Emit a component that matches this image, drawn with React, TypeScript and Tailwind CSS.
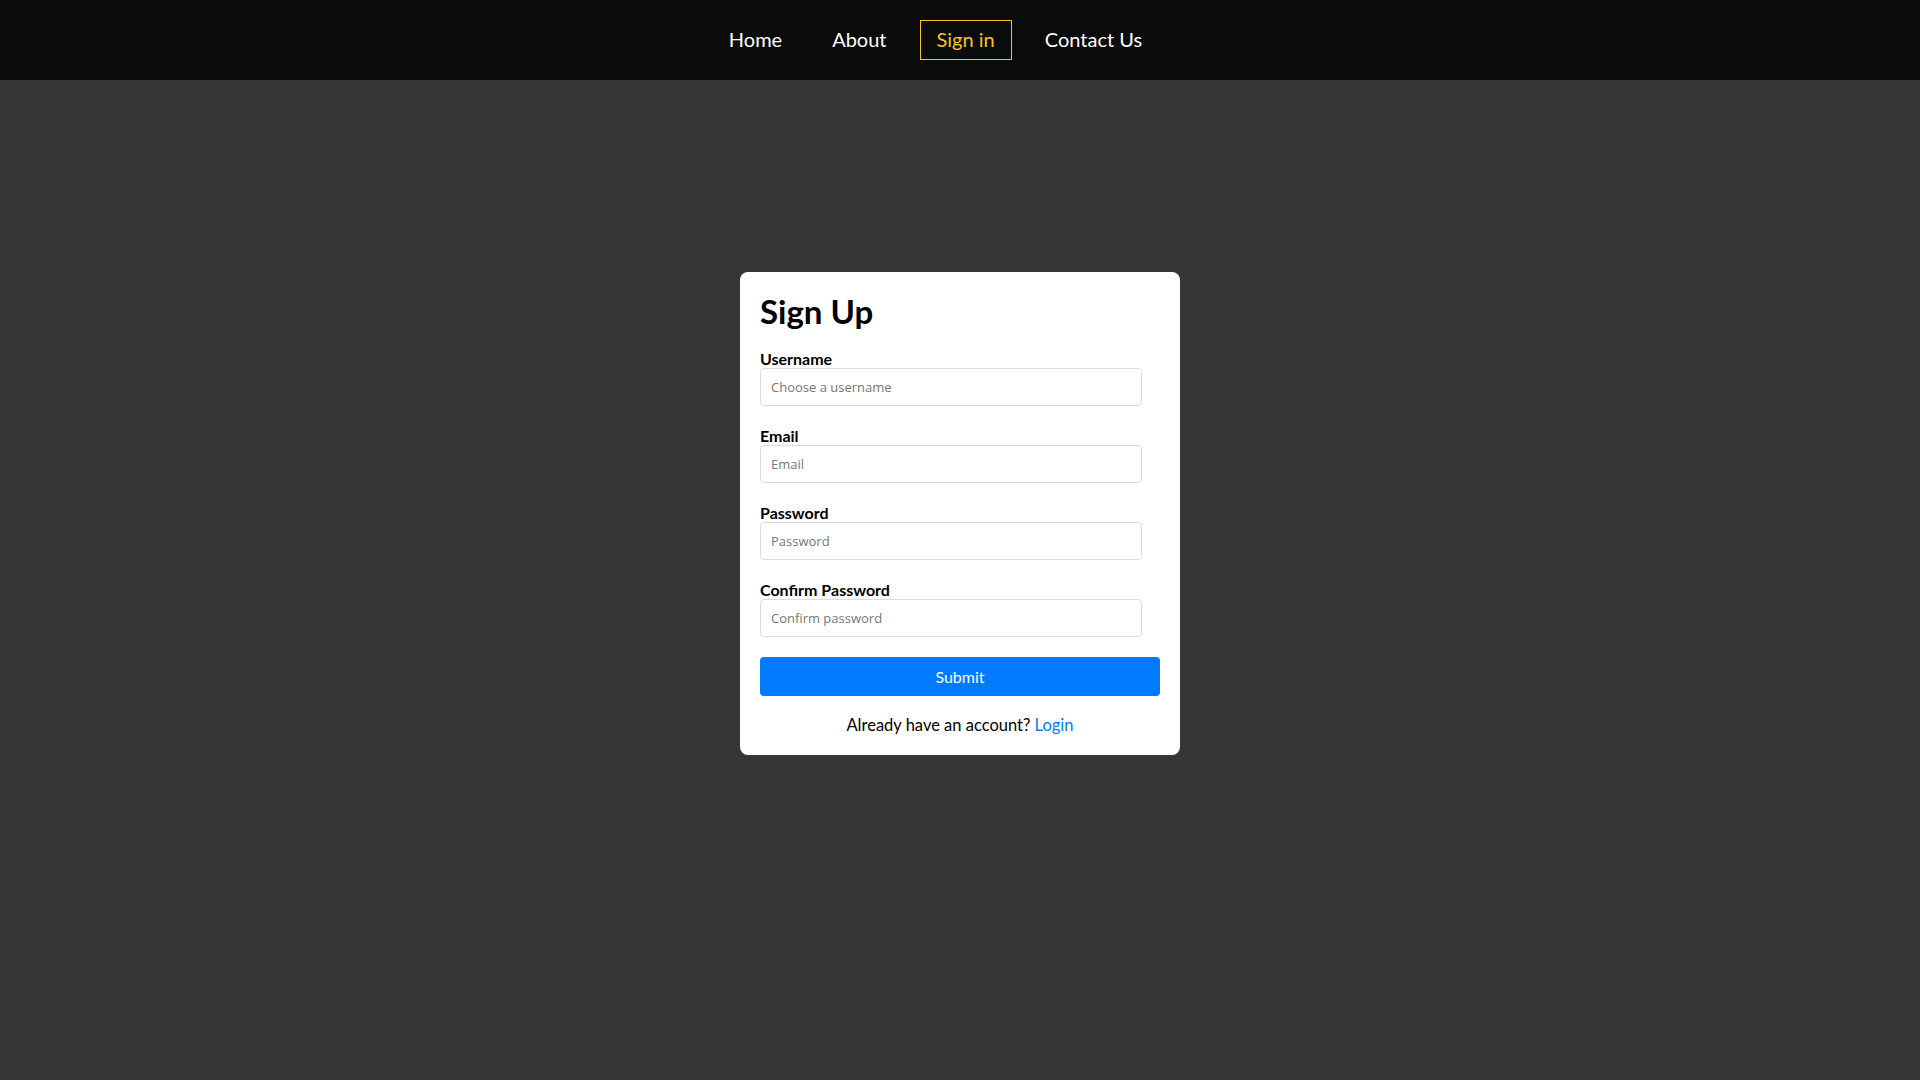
import { useState } from "react"

const navLinks = ["Home", "About", "Sign in", "Contact Us"]

const fields = [
  { label: "Username", placeholder: "Choose a username", type: "text" },
  { label: "Email", placeholder: "Email", type: "email" },
  { label: "Password", placeholder: "Password", type: "password" },
  { label: "Confirm Password", placeholder: "Confirm password", type: "password" },
]

export default function App() {
  const [active] = useState("Sign in")

  return (
    <div className="min-h-screen bg-[#363636] font-['Lato','Noto_Sans',sans-serif]">
      <header className="h-20 bg-[#0b0b0b]">
        <nav className="flex h-full items-center justify-center gap-4 pr-[49px]">
          {navLinks.map((label) => (
            <a
              key={label}
              href="#"
              className={
                label === active
                  ? "border border-[#f2c41d] px-4 pt-[6px] pb-[8px] text-[20px] leading-6 text-[#f2c41d]"
                  : "border border-transparent px-4 pt-[6px] pb-[8px] text-[20px] leading-6 text-white"
              }
            >
              {label}
            </a>
          ))}
        </nav>
      </header>

      <main className="flex justify-center pt-[192px]">
        <form className="w-[440px] rounded-lg bg-white px-5 pt-5 pb-[18px]">
          <h2 className="text-[33px] font-bold leading-[38px] text-black">Sign Up</h2>

          <div className="mt-[19px] flex flex-col gap-5">
            {fields.map((f) => (
              <div key={f.label}>
                <label className="block text-base font-bold leading-[19px] text-black">{f.label}</label>
                <input
                  type={f.type}
                  placeholder={f.placeholder}
                  className="h-[38px] w-[382px] rounded border border-[#dddddd] px-[10px] font-['Open_Sans',sans-serif] text-[13px] text-black placeholder:text-[#777777] outline-none"
                />
              </div>
            ))}
          </div>

          <button
            type="button"
            className="mt-5 h-[39px] w-full rounded bg-[#007bff] text-base text-white"
          >
            Submit
          </button>

          <p className="mt-[17px] text-center text-[16.5px] leading-6 text-black">
            Already have an account?{" "}
            <a href="#" className="text-[#007bff]">
              Login
            </a>
          </p>
        </form>
      </main>
    </div>
  )
}
